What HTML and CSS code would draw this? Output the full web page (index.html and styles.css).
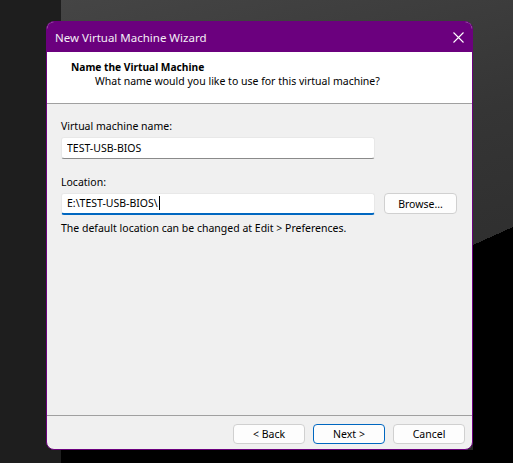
FILE: index.html
```html
<!DOCTYPE html>
<html>
<head>
    <meta charset="utf-8">
    <title>New Virtual Machine Wizard</title>
    <link rel="stylesheet" href="styles.css">
</head>
<body>

<div class="desktop">
  <div class="wizard">
    <div class="titlebar">
      <span class="caption">New Virtual Machine Wizard</span>
      <svg class="close" width="11" height="11" viewBox="0 0 11 11">
        <path d="M0.5 0.5 L10.5 10.5 M10.5 0.5 L0.5 10.5" stroke="#fff" stroke-width="1.1" fill="none"/>
      </svg>
    </div>

    <div class="header">
      <div class="step-title">Name the Virtual Machine</div>
      <div class="step-sub">What name would you like to use for this virtual machine?</div>
    </div>

    <div class="page">
      <label class="field-label" for="vmname">Virtual machine name:</label>
      <input type="text" id="vmname" class="field name-field" value="TEST-USB-BIOS">

      <label class="field-label loc-label" for="vmpath">Location:</label>
      <div class="path-row">
        <div class="field path-field focused">E:\TEST-USB-BIOS\<span class="caret"></span></div>
        <button class="btn browse">Browse...</button>
      </div>
      <div class="hint">The default location can be changed at Edit &gt; Preferences.</div>
    </div>

    <div class="footer">
      <button class="btn">&lt; Back</button>
      <button class="btn default">Next &gt;</button>
      <button class="btn">Cancel</button>
    </div>
  </div>
</div>

</body>
</html>
```

FILE: styles.css
```css
html, body {
  margin: 0;
  padding: 0;
  height: 100%;
}

body {
  font-family: "Noto Sans", "Liberation Sans", sans-serif;
  font-size: 10.5px;
  color: #000;
  overflow: hidden;
}

/* dark desktop behind the dialog */
.desktop {
  height: 463px;
  box-sizing: border-box;
  padding: 21px 0 0 46px;
  background:
    linear-gradient(#1e1e1e, #1e1e1e) 0 0 / 61px 100% no-repeat,
    linear-gradient(to bottom right, transparent 50%, #000 50%) 473px 227px / 40px 18px no-repeat,
    linear-gradient(#000, #000) 473px 245px / 40px 218px no-repeat,
    linear-gradient(#000, #000) 61px 450px / 452px 13px no-repeat,
    linear-gradient(165deg, #464646 0%, #353535 40%, #262626 100%);
}

.wizard {
  width: 427px;
  height: 429px;
  box-sizing: border-box;
  border: 1px solid #6b007e;
  border-radius: 8px;
  overflow: hidden;
  background-color: #f0f0f0;
  display: flex;
  flex-direction: column;
}

.titlebar {
  height: 30px;
  background-color: #6b007e;
  color: #fff;
  display: flex;
  align-items: center;
  justify-content: space-between;
  padding: 0 8px 0 8px;
  flex-shrink: 0;
}

.caption {
  font-size: 11.5px;
  color: #f4eef6;
}

.header {
  height: 52px;
  box-sizing: border-box;
  background-color: #fff;
  border-bottom: 1px solid #a0a0a0;
  padding: 8px 0 0 24px;
  flex-shrink: 0;
}

.step-title {
  font-weight: bold;
  font-size: 10.2px;
  line-height: 14px;
}

.step-sub {
  line-height: 15px;
  margin-left: 24px;
}

.page {
  flex: 1;
  padding: 15px 0 0 14px;
  border-bottom: 1px solid #a0a0a0;
  display: flex;
  flex-direction: column;
  align-items: flex-start;
}

.field-label {
  line-height: 14px;
}

.loc-label {
  margin-top: 16px;
}

.field {
  width: 314px;
  height: 22px;
  box-sizing: border-box;
  margin: 4px 0 0 0;
  padding: 0 5px;
  font-family: inherit;
  font-size: 10.5px;
  color: #000;
  background-color: #fff;
  border: 1px solid #e8e8e8;
  border-bottom: 1px solid #8a8a8a;
  border-radius: 3px;
  outline: none;
  line-height: 20px;
}

.path-row {
  display: flex;
  align-items: flex-start;
  gap: 9px;
}

.path-field.focused {
  border-bottom: 2px solid #0067c0;
  line-height: 19px;
}

.caret {
  display: inline-block;
  width: 1px;
  height: 14px;
  background-color: #000;
  vertical-align: -3px;
  margin-left: 1px;
}

.btn {
  width: 73px;
  height: 21px;
  padding: 0;
  font-family: inherit;
  font-size: 10.5px;
  color: #000;
  background-color: #fdfdfd;
  border: 1px solid #d0d0d0;
  border-radius: 4px;
}

.browse {
  margin-top: 4px;
}

.btn.default {
  border-color: #0067c0;
}

.hint {
  margin-top: 6px;
  line-height: 14px;
}

.footer {
  height: 33px;
  flex-shrink: 0;
  display: flex;
  justify-content: flex-end;
  align-items: flex-start;
  gap: 8px;
  padding: 8px 7px 0 0;
  box-sizing: border-box;
}

.footer .btn {
  width: 72px;
  height: 20px;
}
```
